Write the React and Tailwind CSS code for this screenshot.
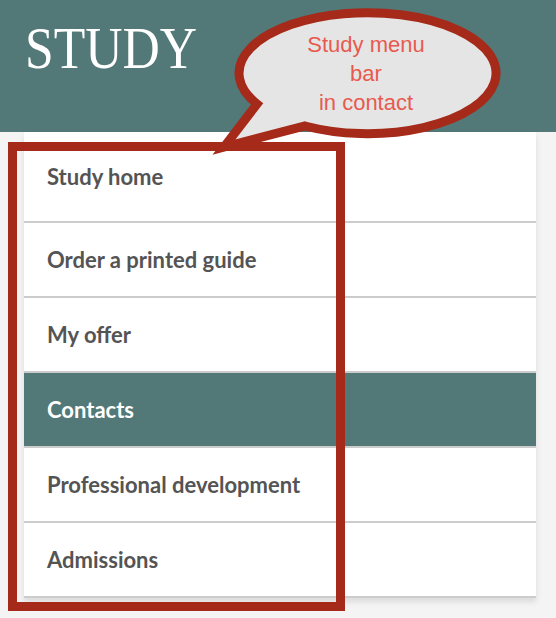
import React from "react";

const items = [
  { label: "Study home", first: true },
  { label: "Order a printed guide" },
  { label: "My offer" },
  { label: "Contacts", active: true },
  { label: "Professional development" },
  { label: "Admissions" },
];

export default function App() {
  return (
    <div className="relative w-[556px] h-[618px] overflow-hidden bg-[#f4f4f4]">
      <header className="h-[132px] bg-[#537878] pl-[25px] pt-[18px]">
        <h1
          className="origin-left scale-x-[0.86] text-[60px] leading-[60px] text-white"
          style={{ fontFamily: '"Liberation Serif", serif' }}
        >
          STUDY
        </h1>
      </header>

      <nav className="ml-[24px] w-[512px] bg-white shadow-[0_4px_6px_rgba(0,0,0,0.10)]">
        {items.map((it) => (
          <div
            key={it.label}
            className={`flex items-center border-b-2 border-[#cccccc] pl-[23px] text-[22px] font-bold ${
              it.first ? "h-[91px]" : "h-[75px]"
            } ${it.active ? "bg-[#537878] text-white" : "text-[#545454]"}`}
            style={{ fontFamily: 'Lato, "Noto Sans", sans-serif' }}
          >
            {it.label}
          </div>
        ))}
      </nav>

      {/* annotation box */}
      <div className="pointer-events-none absolute left-[8px] top-[142px] h-[469px] w-[337px] border-[9px] border-[#a52a1a]" />

      {/* speech bubble */}
      <svg
        className="pointer-events-none absolute left-0 top-0"
        width="556"
        height="170"
        viewBox="0 0 556 170"
      >
        <path
          d="M 257 104 L 224 147 L 305 126 A 128.5 60.5 0 1 0 257 104 Z"
          fill="#e5e5e5"
          stroke="#a52a1a"
          strokeWidth="9"
          strokeLinejoin="miter"
          strokeMiterlimit="10"
        />
      </svg>
      <div
        className="pointer-events-none absolute left-[266px] top-[30px] w-[200px] text-center text-[22px] leading-[29px] text-[#e85a4f]"
        style={{ fontFamily: '"Liberation Sans", Arial, sans-serif' }}
      >
        Study menu
        <br />
        bar
        <br />
        in contact
      </div>
    </div>
  );
}
